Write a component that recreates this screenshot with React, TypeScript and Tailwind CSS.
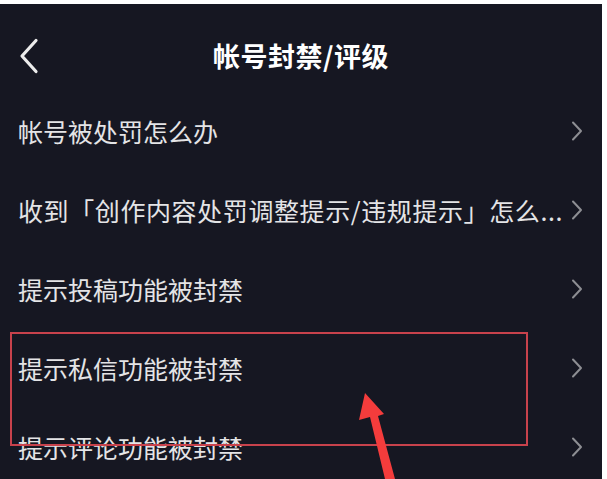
interface Row {
    label: string;
    wide?: boolean;
}

const rows: Row[] = [
    { label: '帐号被处罚怎么办' },
    { label: '收到「创作内容处罚调整提示/违规提示」怎么...', wide: true },
    { label: '提示投稿功能被封禁' },
    { label: '提示私信功能被封禁' },
    { label: '提示评论功能被封禁' },
];

function ArrowRight() {
    return (
        <svg width="12" height="20" viewBox="0 0 12 20" fill="none" className="shrink-0">
            <path d="M2 1.5 L10 10 L2 18.5" stroke="#8d8e93" strokeWidth="2" strokeLinecap="round" strokeLinejoin="round" />
        </svg>
    );
}

function BackIcon() {
    return (
        <svg width="22" height="36" viewBox="0 0 22 36" fill="none">
            <path d="M18 2.5 L4 18 L18 33.5" stroke="#ececec" strokeWidth="3.2" strokeLinecap="round" strokeLinejoin="round" />
        </svg>
    );
}

export default function App() {
    return (
        <div className="w-[607px] h-[479px] overflow-hidden bg-white pt-[4px] pr-[5px]">
            <div
                className="relative h-full bg-[#161722] text-[#e4e4e6]"
                style={{ fontFamily: '"Noto Sans CJK SC", "Noto Sans", sans-serif' }}
            >
                {/* header */}
                <div className="relative h-[87px] flex items-start justify-center pt-[33px]">
                    <div className="absolute left-[18px] top-[34px]">
                        <BackIcon />
                    </div>
                    <h1 className="text-[27px] leading-[38px] font-bold text-white tracking-[0.5px]">帐号封禁/评级</h1>
                </div>

                {/* rows */}
                <ul>
                    {rows.map((row, index) => (
                        <li key={index} className="h-[79px] flex items-center justify-between pl-[18px] pr-[19px]">
                            <span
                                className={
                                    row.wide
                                        ? 'text-[25px] leading-[34px] whitespace-nowrap tracking-[0.6px]'
                                        : 'text-[25px] leading-[34px] whitespace-nowrap'
                                }
                            >
                                {row.label}
                            </span>
                            <ArrowRight />
                        </li>
                    ))}
                </ul>

                {/* annotation box */}
                <div className="absolute left-[10px] top-[328px] w-[518px] h-[114px] border-2 border-[#c8424c]" />

                {/* annotation arrow */}
                <svg className="absolute left-0 top-0" width="602" height="475" viewBox="0 4 602 475">
                    <polygon
                        points="365,393 384,414 378,416 395,479 385,479 370,417 359,420"
                        fill="#f43c3c"
                    />
                </svg>
            </div>
        </div>
    );
}
